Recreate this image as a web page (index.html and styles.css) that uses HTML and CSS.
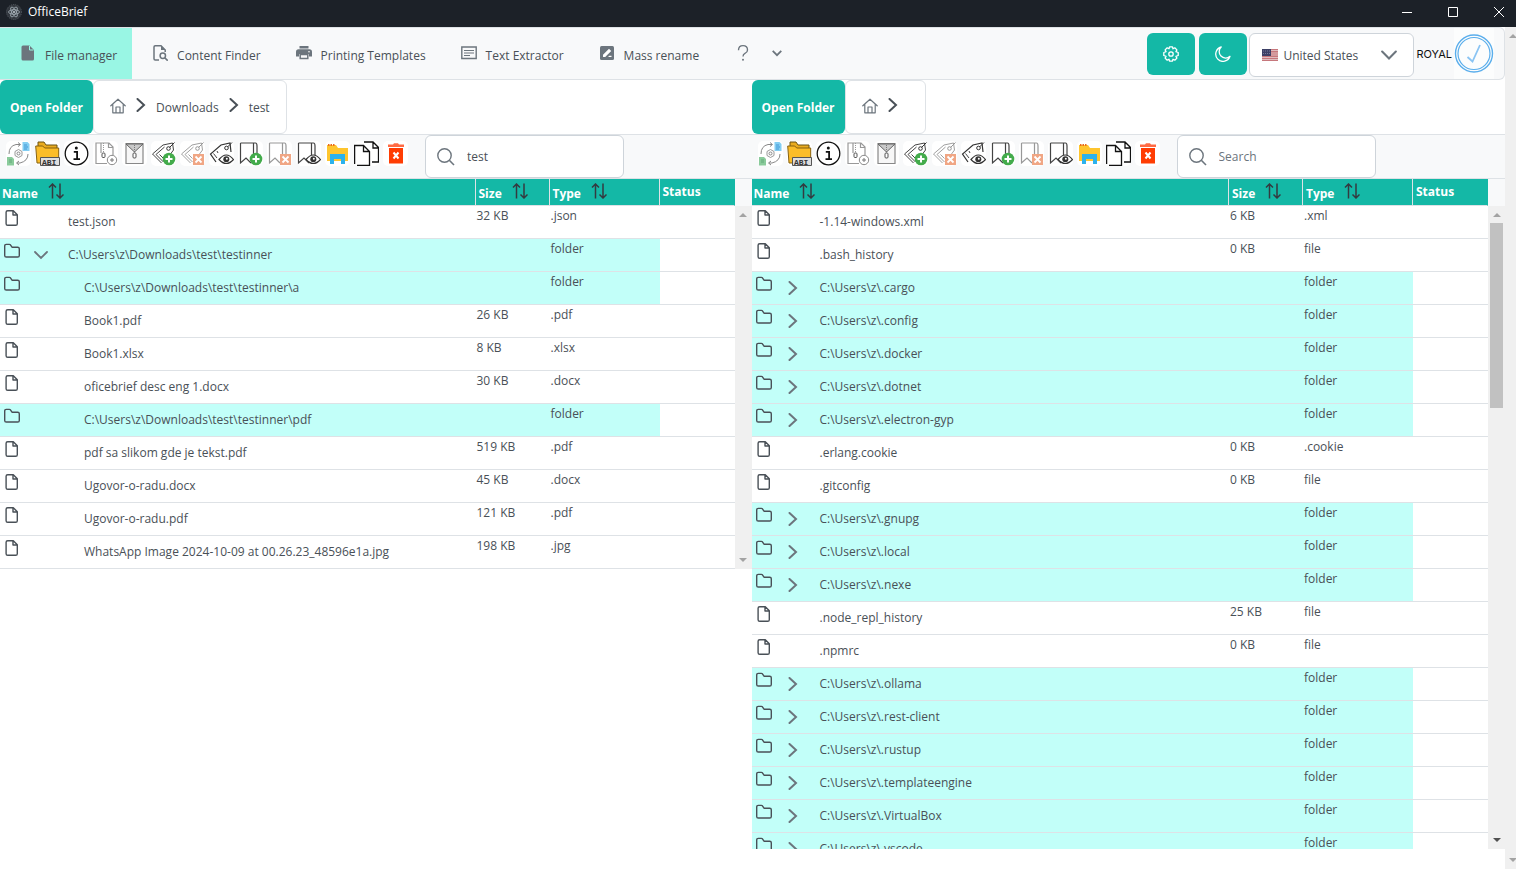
FILE: index.html
```html
<!DOCTYPE html>
<html lang="en">
<head>
    <meta charset="UTF-8">
    <meta name="viewport" content="width=device-width, initial-scale=1.0">
    <title>OfficeBrief</title>
    <link rel="stylesheet" href="styles.css">
</head>
<body>
    <!-- Icon sprite -->
    <svg class="sprite" aria-hidden="true">
        <symbol id="i-home" viewBox="0 0 16 16"><path d="M.8 7.8 8 1.2l7.2 6.6M2.8 6.2v8.6h10.4V6.2M6 14.600V9h4v5.600" fill="none" stroke="currentColor" stroke-width="1.2" stroke-linejoin="round" stroke-linecap="round"/></symbol>
        <symbol id="i-right" viewBox="0 0 14 14"><path d="M3.500 1 10 7l-6.500 6" fill="none" stroke="currentColor" stroke-width="2" stroke-linecap="round"/></symbol>
        <symbol id="i-down" viewBox="0 0 14 14"><path d="M1 4l6 6 6-6" fill="none" stroke="currentColor" stroke-width="1.800" stroke-linecap="round"/></symbol>
        <symbol id="i-sort" viewBox="0 0 16 16"><path d="M4.500 15.500V1M1 4.500 4.500 1 8 4.500M12 .5V15M8.500 11.500 12 15l3.500-3.500" fill="none" stroke="currentColor" stroke-width="1.500"/></symbol>
        <symbol id="i-file" viewBox="0 0 16 16"><path d="M3.700.7h5.600l4 4v9q0 1.600-1.600 1.600H3.700q-1.600 0-1.600-1.600V2.300q0-1.600 1.600-1.600zM9 1v4h4" fill="none" stroke="currentColor" stroke-width="1.400" stroke-linejoin="round"/></symbol>
        <symbol id="i-folder" viewBox="0 0 16 16"><path d="M.7 3v9.400q0 1.600 1.600 1.600h11.400q1.600 0 1.600-1.600V5.800q0-1.600-1.600-1.600H8L6.400 1.800Q6 1.400 5.400 1.400H2.300Q.7 1.400.7 3z" fill="none" stroke="currentColor" stroke-width="1.400" stroke-linejoin="round"/></symbol>
        <symbol id="i-search" viewBox="0 0 18 18"><circle cx="7.500" cy="7.500" r="6.700" fill="none" stroke="currentColor" stroke-width="1.400"/><path d="M12.300 12.300 17 17" stroke="currentColor" stroke-width="1.600"/></symbol>

        <!-- shared parts of the toolbar icons -->
        <symbol id="p-tag" viewBox="0 0 25 25"><path d="M1.500 13 12 4l9.500-2 1 7-3 4M1.500 13l9 9M5 13.500l7.500 7.500M5 13.500 13.500 6M8.500 13.500l4 4" fill="none" stroke="#444"/><circle cx="17.500" cy="7.500" r="1.800" fill="none" stroke="#333"/><path d="M18.500 6.500 23.500 1.500" stroke="#333"/></symbol>
        <symbol id="p-mark" viewBox="0 0 25 25"><path d="M2.500 2h15q1.500 0 1.500 3v12M2.500 2v20l5.500-5 5 5M15.500 2.500V14" fill="none" stroke="#444" stroke-width="1.200"/></symbol>
        <symbol id="p-plus" viewBox="0 0 25 25"><circle cx="18" cy="18" r="6.300" fill="#43ab4b"/><path d="M18 14.500v7M14.500 18h7" stroke="#fff" stroke-width="2"/></symbol>
        <symbol id="p-cross" viewBox="0 0 25 25"><path d="M13 13h11v11H13z" fill="#f0a684"/><path d="m15.500 15.500 6 6m0-6-6 6" stroke="#fff" stroke-width="1.800"/></symbol>
        <symbol id="p-eye" viewBox="0 0 25 25"><path d="M10 18.500q7.300-9 14.500 0-7.200 8-14.500 0z" fill="#fff" stroke="#333" stroke-width="1.200"/><circle cx="17.300" cy="18.300" r="3" fill="#333"/><circle cx="17.800" cy="17.700" r="1" fill="#fff"/></symbol>

        <symbol id="t-convert" viewBox="0 0 25 25"><path d="M3 13Q3 5 10 3.500h4M12 1.500l2.500 2-2.500 2M22 13q0 7-8 9h-3M13 20l-2.500 2 2.500 2" fill="none" stroke="#888"/><path d="M16.500 1h5l2 2v7h-7z" fill="#83cef3"/><path d="M18 4h3m-3 2h4m-4 2h3" stroke="#4298d6"/><path d="M1 16h5l2 2v6.500H1z" fill="#8acb9b"/><path d="M3 19h3m-3 2h3" stroke="#62a979"/><path d="m12.500 8.500 3.500 2v4l-3.500 2-3.500-2v-4z" fill="none" stroke="#999"/><circle cx="12.500" cy="12.500" r="1.500" fill="none" stroke="#888"/></symbol>
        <symbol id="t-abi" viewBox="0 0 25 25"><path d="M3 1h6l2 3h11v4H3z" fill="#e9ab20" stroke="#6b5312"/><path d="M.700 5h7l2 2h14v15H2z" fill="#fbbd29" stroke="#856111"/><path d="M5.500 16.500h19v8h-19z" fill="#dedede" stroke="#555"/><text x="7" y="23.500" font-family="Liberation Mono, monospace" font-size="8" font-weight="bold" fill="#333">ABI</text></symbol>
        <symbol id="t-info" viewBox="0 0 25 25"><circle cx="12.500" cy="12.500" r="11.300" fill="#fff" stroke="#111" stroke-width="1.300"/><circle cx="12.300" cy="7" r="1.500" fill="#111"/><path d="M9.800 10.800h3.300v7m-3.600.4h6.500" fill="none" stroke="#111" stroke-width="1.800"/></symbol>
        <symbol id="t-zip" viewBox="0 0 25 25"><path d="M14 22.500H3V2h13l4 4v8M15.500 2v4.500H20M8 2v10" fill="none" stroke="#999" stroke-width="1.200"/><path d="M10.500 2v10" stroke="#999" stroke-dasharray="1 1"/><rect x="9" y="12" width="3" height="4.500" rx="1" fill="#fff" stroke="#555"/><circle cx="19" cy="19" r="4.700" fill="#fff" stroke="#888"/><path d="M19 17v4m-2-2h4" stroke="#777"/></symbol>
        <symbol id="t-unzip" viewBox="0 0 25 25"><path d="M4 2.500h17v20H4z" fill="#f7f7f7" stroke="#888" stroke-width="1.200"/><path d="m4 3 8.500 8L21 3z" fill="#c9c9c9" stroke="#666"/><path d="M12.500 4v8" stroke="#777" stroke-dasharray="1 1"/><rect x="11" y="12" width="3" height="5" rx="1" fill="#fff" stroke="#555"/></symbol>
        <symbol id="t-tag-add" viewBox="0 0 25 25"><use href="#p-tag"/><use href="#p-plus"/></symbol>
        <symbol id="t-tag-del" viewBox="0 0 25 25"><use href="#p-tag" opacity=".5"/><use href="#p-cross"/></symbol>
        <symbol id="t-tag-view" viewBox="0 0 25 25"><path d="M7 21 1.500 13 12 4l9-2 1 9" fill="none" stroke="#333" stroke-width="1.200"/><path d="M4.500 12.500 8 17M8 10l1 2" stroke="#444"/><circle cx="17.500" cy="7" r="1.800" fill="none" stroke="#333"/><path d="M18.500 6 23 1.500" stroke="#333"/><use href="#p-eye"/></symbol>
        <symbol id="t-mark-add" viewBox="0 0 25 25"><use href="#p-mark"/><use href="#p-plus"/></symbol>
        <symbol id="t-mark-del" viewBox="0 0 25 25"><use href="#p-mark" opacity=".55"/><use href="#p-cross"/></symbol>
        <symbol id="t-mark-view" viewBox="0 0 25 25"><use href="#p-mark"/><use href="#p-eye"/></symbol>
        <symbol id="t-explorer" viewBox="0 0 25 25"><path d="M2 4h9l2 3h10v13H2z" fill="#fec52e"/><path d="M3 4h7" stroke="#e96b1b" stroke-width="2" stroke-dasharray="1.500 1"/><path d="M5 13h15v10h-4v-5H9v5H5z" fill="#2bb2ec"/></symbol>
        <symbol id="t-copy" viewBox="0 0 25 25"><path d="M3 24.500h12.500v-14l-6-6H.600v18.500M9.500 4.500v6h6M10 1h9l5.500 5.500V21H18M19 1v6h5.500" fill="none" stroke="#111" stroke-width="1.300"/></symbol>
        <symbol id="t-trash" viewBox="0 0 25 25"><path d="M5 3.500h5l1-1.200h4l1 1.200h5V6H5z" fill="#ff6a43"/><path d="M6 7h14v15.500H6z" fill="#ff3d03"/><path d="m10.500 11.500 5 6m0-6-5 6" stroke="#fff" stroke-width="2"/></symbol>
    </svg>

    <header class="titlebar">
        <svg class="app-icon" viewBox="0 0 16 16"><circle cx="8" cy="8" r="7.500" fill="#33383f" stroke="#565c63" stroke-dasharray="1 1"/><g fill="none" stroke="#a9b5bd" stroke-width=".8"><ellipse cx="8" cy="8" rx="5.500" ry="2.200"/><ellipse cx="8" cy="8" rx="5.500" ry="2.200" transform="rotate(60 8 8)"/><ellipse cx="8" cy="8" rx="5.500" ry="2.200" transform="rotate(120 8 8)"/></g><circle cx="8" cy="8" r="1" fill="#c9d2d8"/></svg>
        <span class="app-name">OfficeBrief</span>
        <div class="window-buttons">
            <button type="button" aria-label="Minimize"><svg viewBox="0 0 12 12"><path d="M1 6.500h10" stroke="#fff"/></svg></button>
            <button type="button" aria-label="Maximize"><svg viewBox="0 0 12 12"><path d="M1.500 1.500h9v9h-9z" fill="none" stroke="#fff"/></svg></button>
            <button type="button" aria-label="Close"><svg viewBox="0 0 12 12"><path d="m1 1 10 10m0-10L1 11" stroke="#fff"/></svg></button>
        </div>
    </header>

    <div class="window">
        <main class="page">
            <nav class="menubar">
                <a class="menu-item active" href="#"><svg viewBox="0 0 16 16"><path d="M3 .500h6.500L14 5v9q0 1.500-1.500 1.500H3Q1.500 15.500 1.500 14V2Q1.500.5 3 .5z" fill="currentColor"/><path d="M9.500 1v4h4" fill="none" stroke="#99f6e4"/></svg>File manager</a>
                <a class="menu-item" href="#"><svg viewBox="0 0 16 16"><path d="M7 15H3.200Q2 15 2 13.800V2Q2 .8 3.200.8H9L13.200 5v2" fill="none" stroke="currentColor" stroke-width="1.500"/><path d="M9 .5V5h4.500z" fill="currentColor"/><circle cx="10.800" cy="10.800" r="2.700" fill="none" stroke="currentColor" stroke-width="1.500"/><path d="m12.700 12.700 3 3" stroke="currentColor" stroke-width="1.600"/></svg>Content Finder</a>
                <a class="menu-item" href="#"><svg viewBox="0 0 16 16"><path d="M3.500 1h9v2.500h-9zM2.500 4.300h11Q16 4.300 16 7v4.500h-3V9H3v2.500H0V7q0-2.700 2.500-2.700z" fill="currentColor"/><path d="M4.200 9.500h7.600v4H4.200z" fill="none" stroke="currentColor" stroke-width="1.500"/><circle cx="13" cy="6.700" r=".8" fill="#fff"/></svg>Printing Templates</a>
                <a class="menu-item" href="#"><svg viewBox="0 0 16 16"><path d="M.8 2h14.400v11.500H.8z" fill="none" stroke="currentColor" stroke-width="1.400"/><path d="M3 5.500h10M3 8h10M3 10.500h6" stroke="currentColor" stroke-width="1.200"/></svg>Text Extractor</a>
                <a class="menu-item" href="#"><svg viewBox="0 0 16 16"><rect x="1" y="1" width="14" height="14" rx="1.500" fill="currentColor"/><path d="M4 12v-2.200l6-6L12.200 6l-6 6zM9 12l1.300-1.300h2.200V12z" fill="#fff"/></svg>Mass rename</a>
                <a class="menu-item help" href="#" aria-label="Help"><svg viewBox="0 0 20 20"><path d="M5 7q0-5.200 5-5.200T15 6.600q0 2.600-2.800 3.900Q10 11.500 10 14" fill="none" stroke="currentColor" stroke-width="1.500"/><circle cx="10" cy="17.500" r="1.100" fill="currentColor"/></svg><svg class="caret" viewBox="0 0 14 14"><path d="m1 4 6 6 6-6" fill="none" stroke="currentColor" stroke-width="2.500"/></svg></a>

                <div class="menu-end">
                    <button class="square-button" type="button" aria-label="Settings"><svg viewBox="0 0 16 16"><path d="m6.500.800h3l.5 2 1.800-1 2.100 2.100-1 1.800 2.300.8v3l-2.300.8 1 1.800-2.100 2.100-1.800-1-.5 2h-3l-.5-2-1.800 1-2.100-2.100 1-1.800L.8 9.500v-3l2.300-.8-1-1.800 2.100-2.100 1.800 1z" fill="none" stroke="currentColor" stroke-width="1.300" stroke-linejoin="round"/><circle cx="8" cy="8" r="2.200" fill="none" stroke="currentColor" stroke-width="1.300"/></svg></button>
                    <button class="square-button" type="button" aria-label="Dark mode"><svg viewBox="0 0 16 16"><path d="M6.200 1A7.300 7.300 0 1 0 15 10.300 6.400 6.400 0 0 1 6.200 1z" fill="none" stroke="currentColor" stroke-width="1.300" stroke-linejoin="round"/></svg></button>
                    <label class="country">
                        <svg class="flag" viewBox="0 0 16 12"><path d="M0 0h16v12H0z" fill="#eee1e1"/><path d="M0 .8h16M0 2.900h16M0 5h16M0 7.100h16M0 9.200h16M0 11.300h16" stroke="#b9545b" stroke-width="1.100"/><path d="M0 0h9v7H0z" fill="#3d4066"/><path d="M1 2h7M1 4.500h7" stroke="#777b99" stroke-dasharray="1 1"/></svg>
                        <select aria-label="Country"><option>United States</option></select>
                        <svg class="country-caret"><use href="#i-down"/></svg>
                    </label>
                    <span class="brand">ROYAL</span>
                    <svg class="brand-logo" viewBox="0 0 40 51"><path d="M0 0h40v51H0z" fill="#fcfdfd"/><g fill="none" stroke="#5aaeec"><circle cx="20" cy="25.500" r="18.500" stroke-width="1.400"/><circle cx="20" cy="25.500" r="16" stroke-width="1.200"/><path d="m13.500 29 5 4.500L26 17" stroke="#8ac4f3" stroke-width="1.800"/></g></svg>
                </div>
            </nav>

            <div class="panes">
                <section class="pane">
                    <div class="path">
                        <button class="open-folder" type="button">Open Folder</button>
                        <div class="breadcrumb">
                            <a href="#" aria-label="Home"><svg><use href="#i-home"/></svg></a>
                            <svg class="sep"><use href="#i-right"/></svg>
                            <a href="#">Downloads</a>
                            <svg class="sep"><use href="#i-right"/></svg>
                            <a href="#">test</a>
                        </div>
                    </div>
                    <div class="toolbar">
                        <div class="tools"></div>
                        <label class="search"><svg><use href="#i-search"/></svg><input type="text" placeholder="Search" value="test" aria-label="Search"></label>
                    </div>
                    <div class="table-head"></div>
                    <div class="table-body">
                        <table id="left-files"></table>
                        <div class="scrollbar"><i class="up"></i><i class="down"></i></div>
                    </div>
                </section>

                <section class="pane">
                    <div class="path">
                        <button class="open-folder" type="button">Open Folder</button>
                        <div class="breadcrumb">
                            <a href="#" aria-label="Home"><svg><use href="#i-home"/></svg></a>
                            <svg class="sep"><use href="#i-right"/></svg>
                            <span></span>
                        </div>
                    </div>
                    <div class="toolbar">
                        <div class="tools"></div>
                        <label class="search"><svg><use href="#i-search"/></svg><input type="text" placeholder="Search" aria-label="Search"></label>
                    </div>
                    <div class="table-head"></div>
                    <div class="table-body">
                        <table id="right-files"></table>
                        <div class="scrollbar"><i class="up"></i><b class="thumb"></b><i class="down dark"></i></div>
                    </div>
                </section>
            </div>
        </main>
        <div class="scrollbar page-scroll"><i class="up"></i><i class="down"></i></div>
    </div>

    <script src="script.js"></script>
</body>
</html>
```
FILE: styles.css
```css
* {
    box-sizing: border-box;
}

body {
    margin: 0;
    height: 100vh;
    display: flex;
    flex-direction: column;
    overflow: hidden;
    font-family: "Open Sans", "Noto Sans", sans-serif;
    font-size: 12px;
    line-height: 18px;
    color: #495057;
    background: #fff;
}

button, input, select {
    font: inherit;
    color: inherit;
}

button {
    border: none;
    padding: 0;
    background: none;
    cursor: pointer;
}

a {
    color: inherit;
    text-decoration: none;
}

svg {
    display: block;
    flex: none;
}

.sprite {
    position: absolute;
    width: 0;
    height: 0;
}

/* Title bar */
.titlebar {
    flex: none;
    height: 27px;
    display: flex;
    align-items: center;
    padding: 0 11px 4px 6px;
    background: #1c2128;
    color: #fff;
}

.app-icon {
    width: 16px;
    height: 16px;
    margin-right: 6px;
}

.window-buttons {
    display: flex;
    gap: 34px;
    margin-left: auto;
}

.window-buttons svg {
    width: 12px;
    height: 12px;
}

.window {
    flex: 1;
    min-height: 0;
    display: flex;
}

.page {
    flex: 1;
    min-width: 0;
    display: flex;
    flex-direction: column;
}

/* Menu */
.menubar {
    flex: none;
    height: 53px;
    display: flex;
    background: #f8f9fa;
    border: 1px solid #dee2e6;
    border-left: none;
    border-radius: 0 6px 6px 0;
}

.menu-item {
    display: flex;
    align-items: center;
    gap: 9px;
    padding: 4px 15px 0 20px;
    white-space: nowrap;
}

.menu-item svg {
    width: 16px;
    height: 16px;
    margin-bottom: 6px;
    color: #6c757d;
}

.menu-item.active {
    background: #99f6e4;
}

.menu-item.help {
    gap: 20px;
}

.menu-item.help svg {
    width: 18px;
    height: 18px;
}

.menu-item.help .caret {
    width: 10px;
    height: 10px;
}

.menu-end {
    display: flex;
    align-items: flex-start;
    gap: 4px;
    margin-left: auto;
    padding-right: 10px;
}

.square-button {
    width: 48px;
    height: 42px;
    margin-top: 5px;
    display: flex;
    align-items: center;
    justify-content: center;
    border-radius: 6px;
    background: #14b8a6;
    color: #fff;
}

.square-button svg {
    width: 16px;
    height: 16px;
}

.country {
    width: 165px;
    height: 44px;
    margin: 5px -2px 0;
    display: flex;
    align-items: center;
    padding: 0 16px 0 12px;
    background: #fff;
    border: 1px solid #ced4da;
    border-radius: 6px;
}

.flag {
    width: 16px;
    height: 12px;
}

.country select {
    flex: 1;
    min-width: 0;
    appearance: none;
    border: none;
    padding: 2px 0 0 5px;
    background: none;
}

.country-caret {
    width: 16px;
    height: 16px;
    color: #6c757d;
}

.brand {
    font-family: Inter, sans-serif;
    font-size: 11px;
    color: #111;
    line-height: 53px;
}

.brand-logo {
    width: 40px;
    height: 51px;
    margin-left: -2px;
}

/* Panes */
.panes {
    flex: 1;
    min-height: 0;
    display: grid;
    grid-template-columns: calc(50% - 1px) 1fr;
}

.pane {
    min-width: 0;
    min-height: 0;
    display: flex;
    flex-direction: column;
    padding-bottom: 20px;
}

.path {
    flex: none;
    display: flex;
    height: 54px;
}

.open-folder {
    padding: 2px 10px 0;
    border-radius: 6px;
    background: #14b8a6;
    color: #fff;
    font-weight: 700;
    white-space: nowrap;
}

.breadcrumb {
    display: flex;
    align-items: center;
    gap: 10px;
    padding: 2px 16px 0;
    border: 1px solid #dee2e6;
    border-radius: 6px;
}

.breadcrumb svg {
    width: 16px;
    height: 16px;
    margin-bottom: 4px;
    color: #6c757d;
}

.breadcrumb .sep {
    width: 14px;
    height: 14px;
    margin: 0 -2px 6px;
    color: #495057;
}

.breadcrumb span {
    width: 1px;
}

.toolbar {
    flex: none;
    display: flex;
    align-items: flex-start;
    height: 44px;
    padding: 0 4px;
    background: #f8f9fa;
    border-top: 1px solid #dee2e6;
}

.tools {
    display: flex;
    gap: 4px;
    padding: 6px 17px 0 2px;
}

.tools button {
    width: 25px;
    height: 25px;
    border-radius: 5px;
    background: #fff;
}

.tools svg {
    width: 25px;
    height: 25px;
}

.search {
    width: 199px;
    height: 43px;
    display: flex;
    align-items: center;
    gap: 12px;
    padding: 0 11px;
    background: #fff;
    border: 1px solid #ced4da;
    border-radius: 6px;
}

.search svg {
    width: 18px;
    height: 18px;
    color: #6c757d;
}

.search input {
    flex: 1;
    min-width: 0;
    border: none;
    padding: 0;
    outline: none;
    background: none;
}

.search input::placeholder {
    color: #6c757d;
}

/* File tables */
.table-head {
    flex: none;
    padding-right: 17px;
    background: #f8f9fa;
    border-top: 1px solid #dee2e6;
}

table {
    width: 100%;
    table-layout: fixed;
    border-collapse: separate;
    border-spacing: 0;
}

.col-size {
    width: 74px;
}

.col-type {
    width: 110px;
}

.col-status {
    width: 75px;
}

th {
    height: 27px;
    padding: 0 3px;
    background: #14b8a6;
    border-right: 1px solid #dee2e6;
    border-bottom: 1px solid #dee2e6;
    color: #fff;
    font-weight: 700;
    text-align: left;
}

th div {
    display: flex;
    align-items: center;
    gap: 10px;
    padding-top: 4px;
}

th svg {
    width: 16px;
    height: 16px;
    margin-bottom: 6px;
    color: #343a40;
}

th:first-child {
    padding-left: 2px;
}

th:last-child {
    border-right-color: #14b8a6;
}

.table-body {
    min-height: 0;
    display: flex;
    overflow: hidden;
}

.table-body table {
    flex: 1;
    min-width: 0;
    align-self: flex-start;
}

td {
    height: 33px;
    padding: 1px 0 0 1px;
    border-bottom: 1px solid #dee2e6;
    vertical-align: top;
    white-space: nowrap;
}

.folder td:not(:last-child) {
    background: #c2fff9;
    background-clip: padding-box;
}

.file-name {
    display: flex;
    padding: 3px 0 0 3px;
}

.file-name .kind {
    width: 16px;
    height: 16px;
    color: #495057;
}

.toggle {
    width: 14px;
    height: 14px;
    margin: 5px 20px 0 14px;
    color: #6c757d;
}

.toggle svg {
    width: 14px;
    height: 14px;
}

.file-name .label {
    padding-top: 3px;
}

.nested .label {
    padding-left: 16px;
}

/* Scroll bars */
.scrollbar {
    flex: none;
    width: 17px;
    display: flex;
    flex-direction: column;
    align-items: center;
    padding: 7px 0;
    background: #f0f0f0;
}

.scrollbar i {
    border: 4px solid transparent;
}

.scrollbar .up {
    border-top: none;
    border-bottom-color: #a3a3a3;
}

.scrollbar .down {
    margin-top: auto;
    border-bottom: none;
    border-top-color: #a3a3a3;
}

.scrollbar .down.dark {
    border-top-color: #505050;
}

.thumb {
    width: 13px;
    height: 185px;
    margin-top: 6px;
    background: #c1c1c1;
}

.page-scroll {
    width: 11px;
    align-items: flex-start;
    overflow: hidden;
    padding: 7px 0 7px 4px;
}
```
FILE: script.js
```javascript
const tools = [
    ["convert", "Convert"], ["abi", "Rename"], ["info", "Info"], ["zip", "Compress"], ["unzip", "Extract"],
    ["tag-add", "Add tag"], ["tag-del", "Remove tag"], ["tag-view", "View tags"],
    ["mark-add", "Add bookmark"], ["mark-del", "Remove bookmark"], ["mark-view", "View bookmarks"],
    ["explorer", "Open in explorer"], ["copy", "Copy"], ["trash", "Delete"]
];

// name, size, type, nested, toggle icon
const leftFiles = [
    ["test.json", "32 KB", ".json"],
    ["C:\\Users\\z\\Downloads\\test\\testinner", "", "folder", false, "down"],
    ["C:\\Users\\z\\Downloads\\test\\testinner\\a", "", "folder", true],
    ["Book1.pdf", "26 KB", ".pdf", true],
    ["Book1.xlsx", "8 KB", ".xlsx", true],
    ["oficebrief desc eng 1.docx", "30 KB", ".docx", true],
    ["C:\\Users\\z\\Downloads\\test\\testinner\\pdf", "", "folder", true],
    ["pdf sa slikom gde je tekst.pdf", "519 KB", ".pdf", true],
    ["Ugovor-o-radu.docx", "45 KB", ".docx", true],
    ["Ugovor-o-radu.pdf", "121 KB", ".pdf", true],
    ["WhatsApp Image 2024-10-09 at 00.26.23_48596e1a.jpg", "198 KB", ".jpg", true]
];

const dir = name => ["C:\\Users\\z\\" + name, "", "folder", false, "right"];

const rightFiles = [
    ["-1.14-windows.xml", "6 KB", ".xml"],
    [".bash_history", "0 KB", "file"],
    dir(".cargo"), dir(".config"), dir(".docker"), dir(".dotnet"), dir(".electron-gyp"),
    [".erlang.cookie", "0 KB", ".cookie"],
    [".gitconfig", "0 KB", "file"],
    dir(".gnupg"), dir(".local"), dir(".nexe"),
    [".node_repl_history", "25 KB", "file"],
    [".npmrc", "0 KB", "file"],
    dir(".ollama"), dir(".rest-client"), dir(".rustup"), dir(".templateengine"), dir(".VirtualBox"), dir(".vscode")
];

const icon = (id, cls = "") => `<svg class="${cls}"><use href="#${id}"/></svg>`;
const cols = '<colgroup><col><col class="col-size"><col class="col-type"><col class="col-status"></colgroup>';

function row([name, size, type, nested, toggle]) {
    const folder = type === "folder";
    return `<tr class="${folder ? "folder" : ""} ${nested ? "nested" : ""}">
        <td><div class="file-name">${icon(folder ? "i-folder" : "i-file", "kind")}
            ${toggle ? `<button class="toggle" type="button" aria-label="Toggle folder">${icon("i-" + toggle)}</button>` : '<span class="toggle"></span>'}
            <span class="label">${name}</span></div></td>
        <td>${size}</td><td>${type}</td><td></td></tr>`;
}

document.querySelectorAll(".tools").forEach(el => {
    el.innerHTML = tools.map(([id, label]) => `<button type="button" aria-label="${label}">${icon("t-" + id)}</button>`).join("");
});

document.querySelectorAll(".table-head").forEach(el => {
    const sortable = ["Name", "Size", "Type"].map(t => `<th><div>${t}${icon("i-sort")}</div></th>`).join("");
    el.innerHTML = `<table>${cols}<tr>${sortable}<th>Status</th></tr></table>`;
});

document.getElementById("left-files").innerHTML = cols + leftFiles.map(row).join("");
document.getElementById("right-files").innerHTML = cols + rightFiles.map(row).join("");
```
